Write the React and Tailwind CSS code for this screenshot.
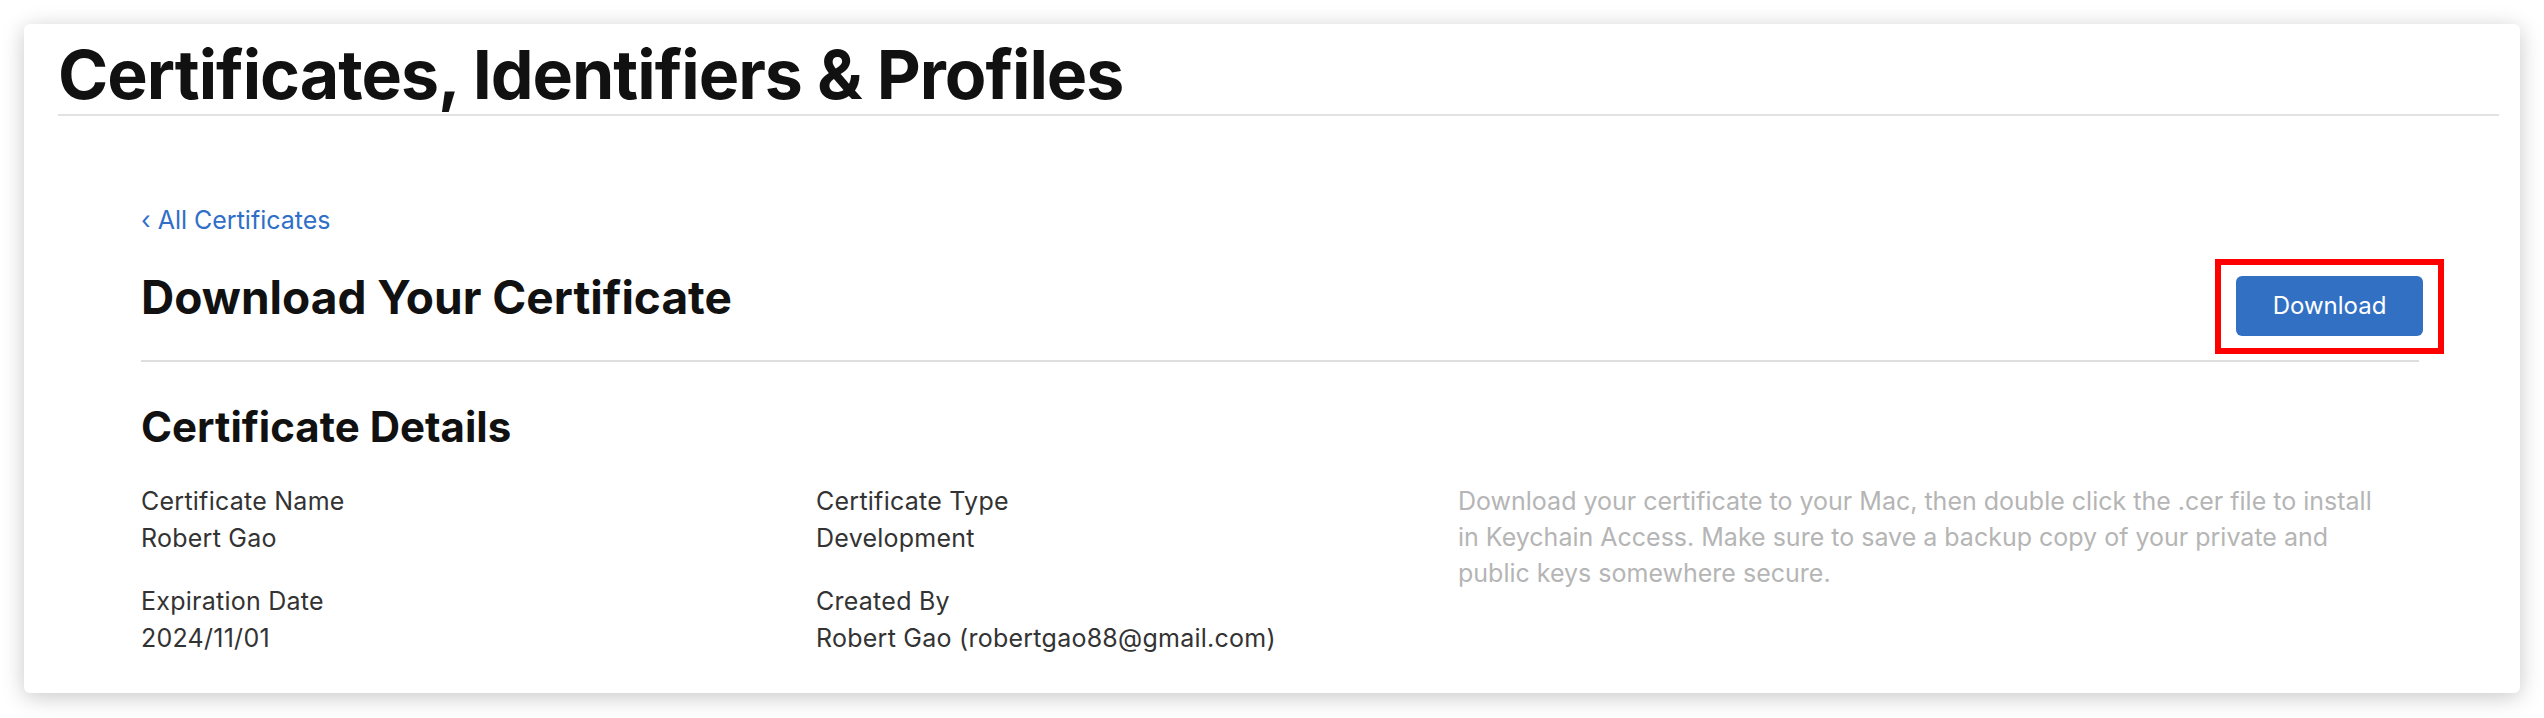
const details = [
  [
    { label: 'Certificate Name', value: 'Robert Gao' },
    { label: 'Expiration Date', value: '2024/11/01' },
  ],
  [
    { label: 'Certificate Type', value: 'Development' },
    { label: 'Created By', value: 'Robert Gao (robertgao88@gmail.com)' },
  ],
];

function Field({ label, value }) {
  return (
    <div className="mb-[26px] last:mb-0 tracking-[0.01em]">
      <p className="leading-[37px]">{label}</p>
      <p className="leading-[37px]">{value}</p>
    </div>
  );
}

export default function App() {
  return (
    <div className="min-h-screen bg-white p-[24px] pr-[24px] font-['Inter',sans-serif]">
      <div className="h-[669px] rounded-[6px] bg-white shadow-[0_4px_22px_rgba(0,0,0,0.22)] pt-[16px]">
        {/* page header */}
        <div className="ml-[34px] mr-[21px] border-b-2 border-[#e2e2e2] pb-[6px]">
          <h1 className="text-[68px] leading-[68px] font-bold tracking-[-0.015em] text-[#111]">
            Certificates, Identifiers &amp; Profiles
          </h1>
        </div>

        <div className="ml-[117px] mr-[101px] text-[25px] text-[#333]">
          <a href="#" className="mt-[86px] block leading-[36px] text-[#2f6fc8]">
            ‹ All Certificates
          </a>

          <div className="flex items-start justify-between border-b-2 border-[#dedede] pb-[6px]">
            <h2 className="mt-[32px] text-[46px] leading-[54px] font-bold text-[#111]">
              Download Your Certificate
            </h2>
            {/* red highlight box round the button */}
            <div className="border-[6px] border-[#ff0000] px-[15px] pt-[11px] pb-[12px] -mr-[25px] mt-[21px]">
              <button className="h-[60px] w-[187px] rounded-[6px] bg-[#3270c4] text-[24px] text-white">
                Download
              </button>
            </div>
          </div>

          <h3 className="mt-[41px] text-[42px] leading-[48px] font-bold text-[#111]">
            Certificate Details
          </h3>

          <div className="mt-[32px] flex">
            {details.map((col, i) => (
              <div key={i} className={i === 0 ? 'w-[675px]' : 'w-[642px]'}>
                {col.map((f) => (
                  <Field key={f.label} {...f} />
                ))}
              </div>
            ))}
            <p className="flex-1 leading-[36px] text-[#b5b5b5]">
              Download your certificate to your Mac, then double click the .cer file to install
              <br />
              in Keychain Access. Make sure to save a backup copy of your private and
              <br />
              public keys somewhere secure.
            </p>
          </div>
        </div>
      </div>
    </div>
  );
}
